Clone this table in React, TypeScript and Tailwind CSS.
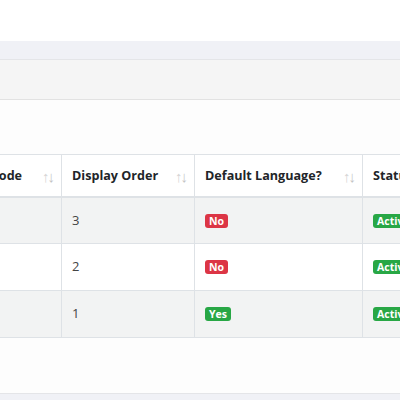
import React from "react";

const SortIcon = () => (
  <span className="absolute right-[8px] top-1/2 -translate-y-1/2 mt-[1px] flex text-[15px] leading-none text-[#c4c4c4] font-normal tracking-[-2px]">
    <span className="opacity-70">↑</span>
    <span>↓</span>
  </span>
);

const Badge = ({ color, children }: { color: string; children: React.ReactNode }) => (
  <span
    className={`inline-block rounded-[3px] px-[4px] py-[1px] text-[10.5px] font-bold leading-[12px] text-white ${color}`}
  >
    {children}
  </span>
);

const rows = [
  { order: "3", def: false },
  { order: "2", def: false },
  { order: "1", def: true },
];

export default function App() {
  return (
    <div className="w-[400px] h-[400px] overflow-hidden bg-white font-['Open_Sans',sans-serif]">
      <div className="h-[41px] bg-white" />
      <div className="h-[19px] bg-[#f0f1f6] border-b border-[#e4e5e8]" />
      <div className="h-[40px] bg-[#f5f5f5] border-b border-[#e2e2e2]" />
      <div className="h-[293px] bg-[#fdfdfd] pt-[54px] overflow-hidden">
        <div className="ml-[-84px]">
          <table className="border-collapse text-[13px] text-[#212529] table-fixed w-[700px]">
            <colgroup>
              <col className="w-[145px]" />
              <col className="w-[133px]" />
              <col className="w-[168px]" />
              <col className="w-[254px]" />
            </colgroup>
            <thead>
              <tr className="h-[42px] bg-white">
                {["Language Code", "Display Order", "Default Language?", "Status"].map((h) => (
                  <th
                    key={h}
                    className="relative border border-[#dee2e6] border-b-2 px-[10px] pt-[3px] text-left text-[12.6px] font-bold whitespace-nowrap"
                  >
                    {h}
                    <SortIcon />
                  </th>
                ))}
              </tr>
            </thead>
            <tbody>
              {rows.map((r, i) => (
                <tr key={i} className={`h-[47px] ${i % 2 === 0 ? "bg-[#f2f3f3]" : "bg-white"}`}>
                  <td className="border border-[#dee2e6] px-[10px]">en</td>
                  <td className="border border-[#dee2e6] px-[10px] text-[#444]">{r.order}</td>
                  <td className="border border-[#dee2e6] px-[10px]">
                    {r.def ? <Badge color="bg-[#28a745]">Yes</Badge> : <Badge color="bg-[#dc3545]">No</Badge>}
                  </td>
                  <td className="border border-[#dee2e6] px-[10px]">
                    <Badge color="bg-[#28a745]">Active</Badge>
                  </td>
                </tr>
              ))}
            </tbody>
          </table>
        </div>
      </div>
      <div className="h-[7px] bg-[#f0f1f6] border-t border-[#e4e5e8]" />
    </div>
  );
}
